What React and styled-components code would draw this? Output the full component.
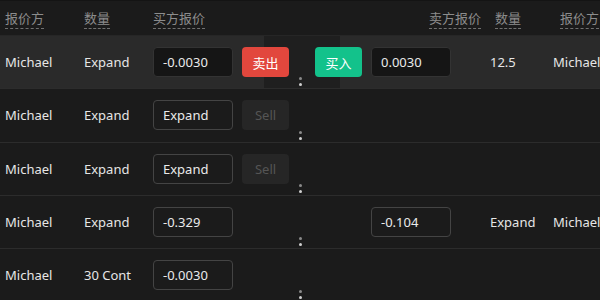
import React from 'react';
import styled, { createGlobalStyle } from 'styled-components';

const GlobalStyle = createGlobalStyle`
  html, body {
    margin: 0;
    padding: 0;
    background: #1b1b1b;
    font-family: 'Noto Sans', 'Noto Sans CJK SC', sans-serif;
    overflow: hidden;
  }
`;

const Table = styled.div`
  width: 600px;
  height: 300px;
  overflow: hidden;
  background: #1b1b1b;
  color: #e6e6e6;
  font-size: 13px;
`;

const HeaderRow = styled.div`
  display: flex;
  height: 36px;
  align-items: center;
  background: #1b1b1b;
  border-top: 1px solid #141414;
  border-bottom: 1px solid #262626;
  box-sizing: border-box;
`;

const Row = styled.div`
  display: flex;
  height: 53.3px;
  align-items: center;
  box-sizing: border-box;
  border-bottom: 1px solid #2c2c2c;
  background: ${p => (p.active ? '#2a2a2a' : '#1b1b1b')};
`;

const Cell = styled.div`
  flex: 0 0 ${p => p.w}px;
  min-width: 0;
  box-sizing: border-box;
  padding-left: ${p => p.pl ?? 5}px;
  padding-right: ${p => p.pr ?? 0}px;
  display: flex;
  align-items: center;
  justify-content: ${p => (p.right ? 'flex-end' : 'flex-start')};
  white-space: nowrap;
  height: 100%;
  position: relative;
  z-index: ${p => (p.top ? 2 : 0)};
`;

const HeadText = styled.span`
  display: inline-block;
  color: #8c8c8c;
  font-size: 13px;
  line-height: 17px;
  padding-bottom: 1px;
  margin-top: 2px;
  border-bottom: 1px dashed #707070;
`;

const Center = styled.div`
  flex: 0 0 76px;
  min-width: 0;
  height: 100%;
  position: relative;
  background: ${p => (p.active ? '#1f1f1f' : 'transparent')};
`;

const Handle = styled.div`
  position: absolute;
  left: 35px;
  bottom: 2px;
  display: flex;
  flex-direction: column;
  gap: 3px;
  span {
    width: 3px;
    height: 3px;
    border-radius: 50%;
    background: #8a8a8a;
  }
  span + span {
    background: #d0d0d0;
  }
`;

const Input = styled.div`
  flex: 0 0 80px;
  height: 30px;
  box-sizing: border-box;
  border: 1px solid ${p => (p.filled ? '#333' : '#444')};
  background: ${p => (p.filled ? '#151515' : 'transparent')};
  border-radius: 4px;
  padding-left: 9px;
  display: flex;
  align-items: center;
  color: #eaeaea;
  font-size: 13px;
`;

const Button = styled.div`
  flex: 0 0 47px;
  height: 30px;
  border-radius: 4px;
  display: flex;
  align-items: center;
  justify-content: center;
  font-size: 13px;
  background: ${p => (p.kind === 'sell' ? '#e2473d' : p.kind === 'buy' ? '#13c28b' : '#262626')};
  color: ${p => (p.kind ? '#fff' : '#555')};
`;

const Pair = styled.div`
  display: flex;
  align-items: center;
  gap: 9px;
  flex-shrink: 0;
  margin-left: ${p => p.shift ?? 0}px;
`;

const rows = [
  { qty: 'Expand', bid: '-0.0030', bidFilled: true, sellBtn: 'sell', askBtn: true, ask: '0.0030', askQty: '12.5', askName: 'Michael', active: true },
  { qty: 'Expand', bid: 'Expand', sellBtn: 'disabled' },
  { qty: 'Expand', bid: 'Expand', sellBtn: 'disabled' },
  { qty: 'Expand', bid: '-0.329', ask: '-0.104', askQty: 'Expand', askName: 'Michael' },
  { qty: '30 Cont', bid: '-0.0030' },
];

export default function App() {
  return (
    <>
      <GlobalStyle />
      <Table>
        <HeaderRow>
          <Cell w={79}><HeadText>报价方</HeadText></Cell>
          <Cell w={69}><HeadText>数量</HeadText></Cell>
          <Cell w={116}><HeadText>买方报价</HeadText></Cell>
          <Center />
          <Cell w={145} right pr={4}><HeadText>卖方报价</HeadText></Cell>
          <Cell w={63} pl={10}><HeadText>数量</HeadText></Cell>
          <Cell w={60} pl={12}><HeadText>报价方</HeadText></Cell>
        </HeaderRow>
        {rows.map((r, i) => (
          <Row key={i} active={r.active}>
            <Cell w={79}>Michael</Cell>
            <Cell w={69}>{r.qty}</Cell>
            <Cell w={116} top>
              <Pair>
                <Input filled={r.bidFilled}>{r.bid}</Input>
                {r.sellBtn === 'sell' && <Button kind="sell">卖出</Button>}
                {r.sellBtn === 'disabled' && <Button>Sell</Button>}
              </Pair>
            </Cell>
            <Center active={r.active}>
              <Handle><span /><span /></Handle>
            </Center>
            <Cell w={145} pl={0} top>
              {r.askBtn ? (
                <Pair shift={-25}>
                  <Button kind="buy">买入</Button>
                  <Input filled>{r.ask}</Input>
                </Pair>
              ) : r.ask ? (
                <Pair shift={31}>
                  <Input>{r.ask}</Input>
                </Pair>
              ) : null}
            </Cell>
            <Cell w={63}>{r.askQty}</Cell>
            <Cell w={60}>{r.askName}</Cell>
          </Row>
        ))}
      </Table>
    </>
  );
}
